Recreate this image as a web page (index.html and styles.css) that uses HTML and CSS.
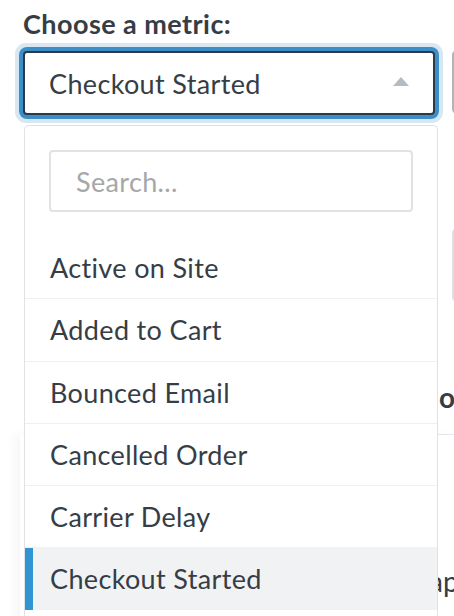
FILE: index.html
```html
<!DOCTYPE html>
<html lang="en">
<head>
<meta charset="utf-8">
<title>Choose a metric</title>
<link rel="stylesheet" href="styles.css">
</head>
<body>
<div class="screen">
  <div class="top">
    <div class="field">
      <div class="label">Choose a metric:</div>
      <div class="select">
        <span class="select-value">Checkout Started</span>
        <svg class="caret" width="16" height="9" viewBox="0 0 16 9"><path d="M0 9 L8 0 L16 9 Z" fill="#b6bbc1"/></svg>
      </div>
    </div>
    <div class="side">
      <div class="side-select"></div>
      <div class="side-input"></div>
    </div>
  </div>
  <div class="section-head"><span>on</span></div>
  <div class="card">
    <div class="card-text">ap</div>
  </div>

  <div class="dropdown">
    <div class="search-wrap">
      <div class="search">Search...</div>
    </div>
    <ul class="options">
      <li class="option">Active on Site</li>
      <li class="option">Added to Cart</li>
      <li class="option">Bounced Email</li>
      <li class="option">Cancelled Order</li>
      <li class="option">Carrier Delay</li>
      <li class="option selected">Checkout Started</li>
    </ul>
  </div>
</div>
</body>
</html>
```

FILE: styles.css
```css
html, body {
  margin: 0;
  padding: 0;
  background: #ffffff;
}

body {
  font-family: "Lato", "Liberation Sans", sans-serif;
  color: #353d46;
}

.screen {
  position: relative;
  width: 454px;
  height: 616px;
  overflow: hidden;
  background: #ffffff;
}

.top {
  display: flex;
  gap: 17px;
  padding-left: 23px;
}

.field {
  width: 412px;
  flex: none;
  padding-top: 11px;
}

.label {
  font-size: 27px;
  line-height: 26px;
  font-weight: 700;
  color: #363d45;
  letter-spacing: 0.45px;
}

.select {
  box-sizing: border-box;
  margin-top: 14px;
  height: 64px;
  border: 2px solid #2b3a4a;
  border-radius: 4px;
  box-shadow: 0 0 0 4px #3b8fc6, 0 0 0 8px #d8e7f2;
  display: flex;
  align-items: center;
  justify-content: space-between;
  padding: 0 24px 0 24px;
  background: #ffffff;
}

.select-value {
  font-size: 27px;
  letter-spacing: 0.35px;
  color: #353d46;
}

.caret {
  display: block;
  margin-top: -3px;
}

.side {
  flex: none;
  width: 120px;
  padding-top: 50px;
}

.side-select {
  box-sizing: border-box;
  height: 64px;
  border: 2px solid #b1b5ba;
  border-radius: 5px;
}

.side-input {
  box-sizing: border-box;
  margin-top: 114px;
  height: 74px;
  border: 2px solid #dcdfe3;
  border-radius: 5px;
}

.section-head {
  margin-top: 78px;
  margin-left: 438px;
  padding: 0 0 20px 1px;
  border-bottom: 1px solid #e7e9ec;
  font-size: 28px;
  line-height: 34px;
  font-weight: 700;
  color: #353d46;
  white-space: nowrap;
}

.card {
  margin-left: 20px;
  height: 200px;
  box-shadow: -6px 0 10px rgba(40, 50, 60, 0.04);
  padding-top: 129px;
  box-sizing: border-box;
}

.card-text {
  padding-left: 409px;
  font-size: 28px;
  line-height: 34px;
  color: #353d46;
  white-space: nowrap;
}

/* dropdown menu overlay */
.dropdown {
  position: absolute;
  left: 24px;
  top: 125px;
  width: 414px;
  box-sizing: border-box;
  border: 1px solid #dfe2e6;
  border-bottom: none;
  border-radius: 5px 5px 0 0;
  background: #ffffff;
  height: 520px;
}

.search-wrap {
  padding: 24px 24px 24px 24px;
}

.search {
  box-sizing: border-box;
  height: 62px;
  border: 2px solid #e1e2e4;
  border-radius: 4px;
  padding-left: 25px;
  display: flex;
  align-items: center;
  font-size: 27px;
  letter-spacing: 0.35px;
  color: #a5a7a9;
}

.options {
  list-style: none;
  margin: 0;
  padding: 0;
}

.option {
  box-sizing: border-box;
  height: 62.25px;
  display: flex;
  align-items: center;
  padding-left: 25px;
  border-top: 1px solid #eef0f2;
  font-size: 27px;
  letter-spacing: 0.35px;
  color: #353d46;
}

.option:first-child {
  border-top: none;
}

.option.selected {
  background: #f1f2f4;
  border-top-color: #f1f2f4;
  box-shadow: inset 8px 0 0 #2f96d3;
}
```
